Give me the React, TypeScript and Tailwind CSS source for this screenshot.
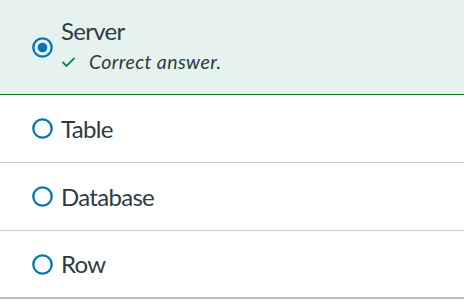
import React from 'react';

const answers = [
    { label: 'Server', selected: true, correct: true },
    { label: 'Table' },
    { label: 'Database' },
    { label: 'Row' },
];

const Radio: React.FC<{ checked?: boolean }> = ({ checked }) => (
    <svg width="21" height="21" viewBox="0 0 21 21" className="shrink-0">
        <circle cx="10.5" cy="10.5" r="9.2" fill="none" stroke="#0374b5" strokeWidth="2.3" />
        {checked && <circle cx="10.5" cy="10.5" r="4.8" fill="#0374b5" />}
    </svg>
);

const Check = () => (
    <svg width="15" height="12" viewBox="0 0 15 12" className="shrink-0">
        <path d="M1.5 6 L5.5 10 L13.5 1.8" fill="none" stroke="#0b874b" strokeWidth="1.8" />
    </svg>
);

export default function App() {
    return (
        <div className="w-[464px] h-[301px] bg-white text-[#2d3b45] font-['Lato','Liberation_Sans',sans-serif]">
            {answers.map((a) =>
                a.correct ? (
                    <div
                        key={a.label}
                        className="flex items-center h-[95px] pl-[32px] gap-2 bg-[#e6f2ee] border-b border-[#14761e]"
                    >
                        <Radio checked />
                        <div className="flex flex-col gap-[3px] pb-[2px]">
                            <span className="text-[24px] leading-[28px] tracking-[-0.7px]">{a.label}</span>
                            <span className="flex items-center gap-[13px] text-[19.5px] leading-[28px] tracking-[0.4px] italic">
                                <Check />
                                Correct answer.
                            </span>
                        </div>
                    </div>
                ) : (
                    <div
                        key={a.label}
                        className="flex items-center h-[68px] pl-[32px] gap-2 border-b border-[#c7cdd1] last:border-b-2 last:border-[#bbbfc3]"
                    >
                        <Radio />
                        <span className="text-[24px] leading-[28px] tracking-[-0.7px]">{a.label}</span>
                    </div>
                )
            )}
        </div>
    );
}
